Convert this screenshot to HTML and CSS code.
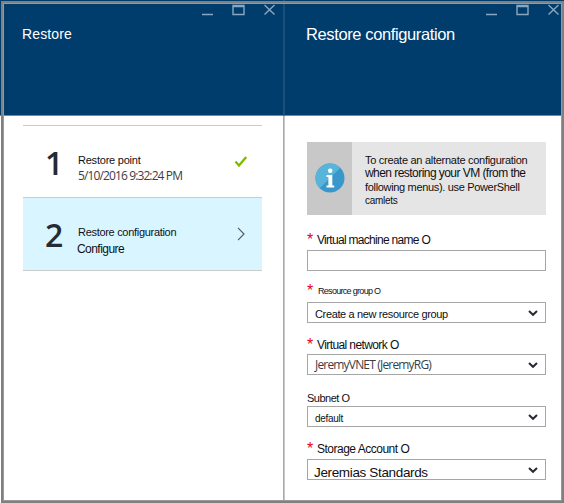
FILE: index.html
```html
<!DOCTYPE html>
<html lang="en">
<head>
<meta charset="utf-8">
<title>Restore</title>
<link rel="stylesheet" href="styles.css">
</head>
<body>
<main class="workspace">
  <section class="blade blade-steps">
    <header class="blade-header">
      <svg class="controls" width="74" height="14" viewBox="0 0 74 14"><path class="ctl" d="M0 10.500h11M31 1.500h11v9H31zM31 2.500h11M62.500 1l10 9.500M72.500 1l-10 9.500"/></svg>
      <h1 class="title title-small">Restore</h1>
    </header>
    <div class="steps">
      <div class="step">
        <div class="number">1</div>
        <div class="step-text">
          <div class="step-name">Restore point</div>
          <div class="step-date">5/10/2016 9:32:24 PM</div>
        </div>
        <svg class="step-icon" width="14" height="14" viewBox="0 0 14 14"><path class="check" d="M1.500 6.500L5 10.500L12.200 2"/></svg>
      </div>
      <div class="step active">
        <div class="number">2</div>
        <div class="step-text">
          <div class="step-name long">Restore configuration</div>
          <div class="step-action">Configure</div>
        </div>
        <svg class="step-icon" width="14" height="14" viewBox="0 0 14 14"><path class="chevron" d="M4 .8L10 7L4 13.200"/></svg>
      </div>
    </div>
  </section>
  <section class="blade blade-config">
    <header class="blade-header">
      <svg class="controls" width="74" height="14" viewBox="0 0 74 14"><path class="ctl" d="M0 10.500h11M31 1.500h11v9H31zM31 2.500h11M62.500 1l10 9.500M72.500 1l-10 9.500"/></svg>
      <h1 class="title title-large">Restore configuration</h1>
    </header>
    <div class="form">
      <div class="notice">
        <div class="notice-icon">
          <svg width="30" height="30" viewBox="0 0 30 30"><circle cx="15" cy="15" r="14.500" fill="#3997cb"/><path d="M4.700 25.300A14.500 14.500 0 0 1 25.300 4.700z" fill="#59b4d9"/><circle cx="15.200" cy="7.800" r="2.300" fill="#fff"/><path d="M11.500 12h5.800v10.500h1.900V24.500h-7.700v-2h1.900V14h-1.900z" fill="#fff"/></svg>
        </div>
        <div class="notice-text">
          <div class="n1">To create an alternate configuration</div>
          <div class="n2">when restoring your VM (from the</div>
          <div class="n3">following menus). use PowerShell</div>
          <div class="n4">camlets</div>
        </div>
      </div>
      <div class="field f-name"><div class="label"><span class="req">*</span><span class="label-text">Virtual machine name O</span></div><div class="control"></div></div>
      <div class="field f-group"><div class="label"><span class="req">*</span><span class="label-text">Resource group O</span></div><div class="control"><span class="value">Create a new resource group</span><svg class="caret" width="10" height="8" viewBox="0 0 10 8"><path d="M1 2l4 3.800L9 2"/></svg></div></div>
      <div class="field f-net"><div class="label"><span class="req">*</span><span class="label-text">Virtual network O</span></div><div class="control"><span class="value">JeremyVNET (JeremyRG)</span><svg class="caret" width="10" height="8" viewBox="0 0 10 8"><path d="M1 2l4 3.800L9 2"/></svg></div></div>
      <div class="field f-subnet"><div class="label"><span class="label-text">Subnet O</span></div><div class="control"><span class="value">default</span><svg class="caret" width="10" height="8" viewBox="0 0 10 8"><path d="M1 2l4 3.800L9 2"/></svg></div></div>
      <div class="field f-storage"><div class="label"><span class="req">*</span><span class="label-text">Storage Account O</span></div><div class="control"><span class="value">Jeremias Standards</span><svg class="caret" width="10" height="8" viewBox="0 0 10 8"><path d="M1 2l4 3.800L9 2"/></svg></div></div>
    </div>
  </section>
</main>
</body>
</html>
```
FILE: styles.css
```css
* { box-sizing: border-box; }
body { margin: 0; font-family: "Liberation Sans", Arial, sans-serif; color: #101014; }
svg { display: block; flex: none; }
.workspace { position: relative; display: flex; width: 564px; height: 503px; overflow: hidden; background: #fff; white-space: nowrap; }
/* window frame over both blades */
.workspace::after { content: ""; position: absolute; inset: 1px 0 0 1px; border: 2px solid #808080; box-shadow: inset 0 0 0 1px #999; pointer-events: none; }
.blade { height: 503px; }
.blade-steps { width: 284px; border-right: 1px solid #aaa; }
.blade-config { width: 280px; border-left: 1px solid #c8c8c8; }
.blade-header { height: 116px; background: #003c6c; border-bottom: 1px solid #6b8ba7; padding-top: 4px; }
.blade-steps .blade-header { width: 284px; border-right: 1px solid #1c4f7b; }
.blade-config .blade-header { margin-left: -1px; border-left: 1px solid #1c4f7b; }
.controls { margin-left: 202px; }
.blade-config .controls { margin-left: 201px; }
.ctl { fill: none; stroke: #8aa7bf; stroke-width: 1.4; }
.title { margin: 0; color: #fff; font-weight: 400; }
.title-small { margin: 6px 0 0 22px; font-size: 14px; line-height: 20px; letter-spacing: .12px; }
.title-large { margin: 6px 0 0 21px; font-size: 16.5px; line-height: 20px; letter-spacing: -.38px; }
.steps { margin: 9px 0 0 23px; width: 239px; border-top: 1px solid #ccc; }
.step { display: flex; height: 72px; border-bottom: 1px solid #ccc; }
.step.active { height: 73px; background: #d9f5ff; }
.number { width: 55px; padding: 14px 0 0 22px; font: 600 32px/46px "Open Sans", sans-serif; color: #252a33; }
.step-text { width: 155px; padding-top: 26px; }
.step-name { height: 16px; font-size: 11px; line-height: 16px; letter-spacing: -.22px; }
.step-name.long { letter-spacing: -.3px; }
.step-date { font: 12px/16px "Open Sans", sans-serif; letter-spacing: -.88px; color: #3b3e44; }
.step-action { font-size: 12px; line-height: 18px; letter-spacing: -.55px; margin-left: -1px; }
.step-icon { margin: 29px 0 0 1px; }
.check { fill: none; stroke: #7fba00; stroke-width: 2.3; }
.chevron { fill: none; stroke: #555c63; stroke-width: 1.2; }
.form { padding: 26px 0 0 22px; width: 261px; }
.notice { display: flex; width: 239px; height: 73px; background: #e5e5e5; }
.notice-icon { width: 45px; padding: 21px 0 0 8px; background: #c8c8c8; }
.notice-text { padding: 11px 0 0 13px; }
.n1 { font-size: 11px; line-height: 14px; letter-spacing: -.28px; }
.n2 { font-size: 12px; line-height: 13px; letter-spacing: -.55px; }
.n3 { font-size: 11px; line-height: 15px; letter-spacing: -.33px; }
.n4 { font-size: 10px; line-height: 11px; letter-spacing: -.3px; }
.field { display: flex; flex-direction: column; justify-content: flex-end; width: 239px; height: 52px; }
.f-name { height: 56px; }
.f-storage { height: 53px; }
.label { display: flex; height: 19px; line-height: 18px; font-size: 12px; }
.req { width: 10px; color: #e3001b; font-size: 16px; line-height: 18px; }
.control { display: flex; justify-content: space-between; height: 21px; border: 1px solid #a6a6a6; padding: 0 7px; line-height: 19px; }
.caret { margin-top: 6px; }
.caret path { fill: none; stroke: #252a33; stroke-width: 2; }
.f-name .label-text { letter-spacing: -.7px; }
.f-group .req { width: 11px; }
.f-group .label { height: 20px; }
.f-group .label-text { font-size: 9px; letter-spacing: -.7px; }
.f-group .value { font-size: 11px; line-height: 23px; letter-spacing: -.36px; }
.f-net .label { height: 18px; }
.f-net .label-text { letter-spacing: -.6px; }
.f-net .value { font: 12px/19px "Open Sans", sans-serif; letter-spacing: -.82px; color: #3b3e44; }
.f-subnet .label { height: 17px; }
.f-subnet .label-text { font-size: 11px; letter-spacing: -.5px; }
.f-subnet .value { font-size: 10px; line-height: 23px; letter-spacing: -.3px; }
.f-storage .label { height: 19px; }
.f-storage .label-text { letter-spacing: -.5px; }
.f-storage .value { font-size: 13.5px; line-height: 25px; letter-spacing: -.35px; margin-left: -1px; }
```
